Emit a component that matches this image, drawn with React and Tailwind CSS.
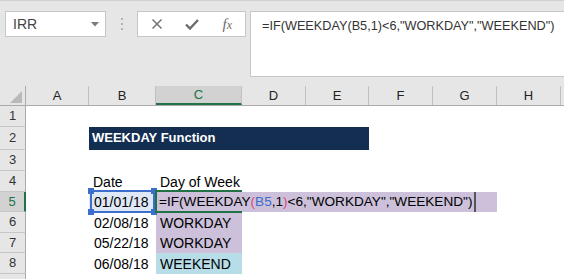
import React from 'react'

const cols = [
  { k: 'A', w: 'w-[63px]' },
  { k: 'B', w: 'w-[67px]' },
  { k: 'C', w: 'w-[86px]', active: true },
  { k: 'D', w: 'w-[64px]' },
  { k: 'E', w: 'w-[63px]' },
  { k: 'F', w: 'w-[64px]' },
  { k: 'G', w: 'w-[64px]' },
  { k: 'H', w: 'w-[64px]' },
  { k: '', w: 'w-[64px]' },
]

function RowHead({ n, active }) {
  return (
    <div
      className={`w-[26px] shrink-0 h-full flex items-center justify-center text-[13px] border-b border-[#c6c6c6] ${
        active
          ? 'bg-[#d2d2d2] text-[#217346] border-r-2 border-r-[#217346]'
          : 'bg-[#e6e6e6] text-[#333] border-r border-r-[#ababab]'
      }`}
    >
      {n}
    </div>
  )
}

function Toolbar() {
  return (
    <div className="h-[86px] bg-[#e6e6e6] border-t border-[#d0d0d0] pt-[10px] flex items-start">
      {/* Name box */}
      <div className="ml-[5px] w-[101px] h-[26px] bg-white border border-[#c6c6c6] flex items-center justify-between pl-[7px] pr-[6px]">
        <span className="text-[14px] text-[#444]">IRR</span>
        <svg width="8" height="5" viewBox="0 0 8 5">
          <path d="M0 0h8L4 4.5z" fill="#7a7a7a" />
        </svg>
      </div>

      <div className="w-[31px] h-[26px] flex flex-col items-center justify-center gap-[3px]">
        <div className="w-[2px] h-[2px] bg-[#b3b3b3]" />
        <div className="w-[2px] h-[2px] bg-[#b3b3b3]" />
        <div className="w-[2px] h-[2px] bg-[#b3b3b3]" />
      </div>

      {/* Cancel / enter / fx */}
      <div className="w-[109px] h-[26px] bg-white border border-[#c6c6c6] flex items-center pl-[1px]">
        <div className="w-[36px] flex justify-center">
          <svg width="12" height="12" viewBox="0 0 12 12">
            <path d="M1.5 1.5l9 9M10.5 1.5l-9 9" stroke="#6b6b6b" strokeWidth="1.4" />
          </svg>
        </div>
        <div className="w-[36px] flex justify-center">
          <svg width="14" height="11" viewBox="0 0 14 11">
            <path d="M1 5.5l4 4 8-8.5" stroke="#6b6b6b" strokeWidth="2.4" fill="none" />
          </svg>
        </div>
        <div className="w-[36px] flex justify-center">
          <span className="font-['Liberation_Serif',serif] italic text-[15px] leading-none text-[#6b6b6b]">
            f<span className="text-[12px]">x</span>
          </span>
        </div>
      </div>

      {/* Formula bar */}
      <div className="ml-[4px] flex-1 h-[66px] bg-white border border-r-0 border-[#c6c6c6] pl-[11px] pt-[5px] text-[12.7px] text-[#333] whitespace-nowrap">
        =IF(WEEKDAY(B5,1)&lt;6,"WORKDAY","WEEKEND")
      </div>
    </div>
  )
}

function ColumnHeaders() {
  return (
    <div className="flex h-[20px] bg-[#e6e6e6] border-b border-[#ababab]">
      <div className="w-[26px] shrink-0 h-full border-r border-[#ababab] flex items-end justify-end pr-[3px] pb-[2px]">
        <svg width="12" height="12" viewBox="0 0 12 12">
          <path d="M12 0v12H0z" fill="#b9b9b9" />
        </svg>
      </div>
      {cols.map((c, i) => (
        <div
          key={i}
          className={`${c.w} shrink-0 h-full flex items-center justify-center text-[13px] border-r border-r-[#c0c0c0] ${
            c.active ? 'bg-[#d2d2d2] text-[#217346] border-b-2 border-b-[#217346]' : 'text-[#222]'
          }`}
        >
          {c.k}
        </div>
      ))}
    </div>
  )
}

function Cell({ w, bg = '', children }) {
  return (
    <div className={`${w} shrink-0 h-full flex items-end pl-[4px] pb-[3px] leading-[14px] whitespace-nowrap ${bg}`}>
      {children}
    </div>
  )
}

export default function App() {
  return (
    <div className="w-[564px] h-[279px] overflow-hidden bg-white font-['Liberation_Sans',Arial,sans-serif] text-black">
      <Toolbar />
      <ColumnHeaders />

      <div className="text-[14px]">
        {/* 1 */}
        <div className="flex h-[21px]">
          <RowHead n={1} />
        </div>

        {/* 2 */}
        <div className="flex h-[23px]">
          <RowHead n={2} />
          <Cell w="w-[63px]" />
          <div className="w-[280px] shrink-0 h-full bg-[#142e52] text-white font-bold text-[13px] flex items-end pl-[3px] pb-[5px] leading-[14px]">
            WEEKDAY Function
          </div>
        </div>

        {/* 3 */}
        <div className="flex h-[21px]">
          <RowHead n={3} />
        </div>

        {/* 4 */}
        <div className="flex h-[21px]">
          <RowHead n={4} />
          <Cell w="w-[63px]" />
          <Cell w="w-[67px]">Date</Cell>
          <Cell w="w-[86px]">Day of Week</Cell>
        </div>

        {/* 5 - editing */}
        <div className="flex h-[20px]">
          <RowHead n={5} active />
          <Cell w="w-[63px]" />
          <div className="relative w-[67px] shrink-0 h-full bg-[#dfe8f6] flex items-end pl-[5px] pb-[3px] leading-[14px]">
            01/01/18
            <div className="absolute left-[1px] right-[1px] -top-[2px] -bottom-[1px] border-2 border-[#3b6fcb]" />
            <div className="absolute -left-[1px] -top-[4px] w-[6px] h-[6px] bg-[#3b6fcb]" />
            <div className="absolute -right-[1px] -top-[4px] w-[6px] h-[6px] bg-[#3b6fcb]" />
            <div className="absolute -left-[1px] -bottom-[3px] w-[6px] h-[6px] bg-[#3b6fcb]" />
            <div className="absolute -right-[1px] -bottom-[3px] w-[6px] h-[6px] bg-[#3b6fcb]" />
          </div>
          <div className="relative w-[341px] shrink-0 h-full bg-[#ccc0da] flex items-end pl-[3px] pb-[3px] leading-[14px] whitespace-nowrap">
            <div className="absolute -left-[1px] -top-[2px] -bottom-[1px] w-[87px] border-t-2 border-b-2 border-l-2 border-[#217346]" />
            <span className="relative text-[13.6px]">
              =IF(WEEKDAY<span className="text-[#e0457b]">(</span>
              <span className="text-[#3b6fcb]">B5</span>,1<span className="text-[#e0457b]">)</span>
              &lt;6,"WORKDAY","WEEKEND")
            </span>
            <div className="relative w-[2px] h-[20px] -mb-[3px] ml-[2px] bg-[#555]" />
          </div>
        </div>

        {/* 6 */}
        <div className="flex h-[21px]">
          <RowHead n={6} />
          <Cell w="w-[63px]" />
          <Cell w="w-[67px]">
            <span className="pl-[1px]">02/08/18</span>
          </Cell>
          <Cell w="w-[86px]" bg="bg-[#ccc0da]">WORKDAY</Cell>
        </div>

        {/* 7 */}
        <div className="flex h-[20px]">
          <RowHead n={7} />
          <Cell w="w-[63px]" />
          <Cell w="w-[67px]">
            <span className="pl-[1px]">05/22/18</span>
          </Cell>
          <Cell w="w-[86px]" bg="bg-[#ccc0da]">WORKDAY</Cell>
        </div>

        {/* 8 */}
        <div className="flex h-[21px]">
          <RowHead n={8} />
          <Cell w="w-[63px]" />
          <Cell w="w-[67px]">
            <span className="pl-[1px]">06/08/18</span>
          </Cell>
          <Cell w="w-[86px]" bg="bg-[#b7dee8]">WEEKEND</Cell>
        </div>

        {/* 9 */}
        <div className="flex h-[21px]">
          <RowHead n="" />
        </div>
      </div>
    </div>
  )
}
